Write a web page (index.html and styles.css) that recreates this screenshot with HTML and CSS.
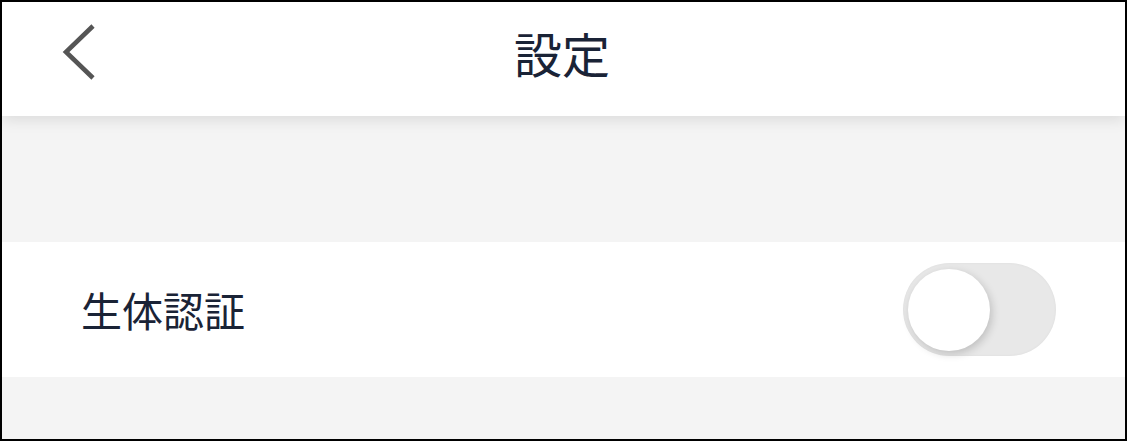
FILE: index.html
```html
<!DOCTYPE html>
<html lang="ja">
<head>
<meta charset="utf-8">
<title>設定</title>
<link rel="stylesheet" href="styles.css">
</head>
<body>
<div class="frame">
  <header class="header">
    <button class="back" aria-label="戻る">
      <svg width="44" height="64" viewBox="0 0 44 64"><path d="M37 8 L10 34 L37 60" fill="none" stroke="#555" stroke-width="4.6"/></svg>
    </button>
    <h1 class="title">設定</h1>
  </header>
  <div class="spacer"></div>
  <div class="row">
    <span class="label">生体認証</span>
    <div class="toggle"><div class="knob"></div></div>
  </div>
  <div class="bottom"></div>
</div>
</body>
</html>
```
FILE: styles.css
```css
html, body { margin: 0; padding: 0; }
body { font-family: "Noto Sans CJK JP", "Noto Sans", sans-serif; background: #000; }
.frame {
  width: 1127px; height: 441px; box-sizing: border-box;
  border: 2px solid #000; background: #f4f4f4;
  display: flex; flex-direction: column; overflow: hidden;
}
.header {
  height: 114px; background: #fff; position: relative;
  display: flex; align-items: center; justify-content: center;
  box-shadow: 0 4px 14px rgba(0,0,0,0.10);
  z-index: 1;
}
.back {
  position: absolute; left: 54px; top: 16px;
  border: 0; background: none; padding: 0; margin: 0;
  width: 44px; height: 64px; display: block;
}
.back svg { display: block; }
.title {
  margin: 0; font-size: 48px; font-weight: 400; color: #1a2336;
  line-height: 1; margin-top: -14px; margin-right: 3px; letter-spacing: 0;
}
.spacer { height: 126px; }
.row {
  height: 135px; background: #fff;
  display: flex; align-items: center; justify-content: space-between;
  padding: 0 69px 0 79px;
}
.label { font-size: 41px; color: #1a2336; line-height: 1; }
.toggle {
  width: 153px; height: 93px; border-radius: 47px; background: #e8e8e8;
  display: flex; align-items: center; padding-left: 5px; box-sizing: border-box;
  box-shadow: inset 0 0 3px rgba(0,0,0,0.05);
}
.knob {
  width: 82px; height: 82px; border-radius: 50%; background: #fff;
  box-shadow: 2px 3px 8px rgba(0,0,0,0.18);
}
.bottom { flex: 1; }
```
